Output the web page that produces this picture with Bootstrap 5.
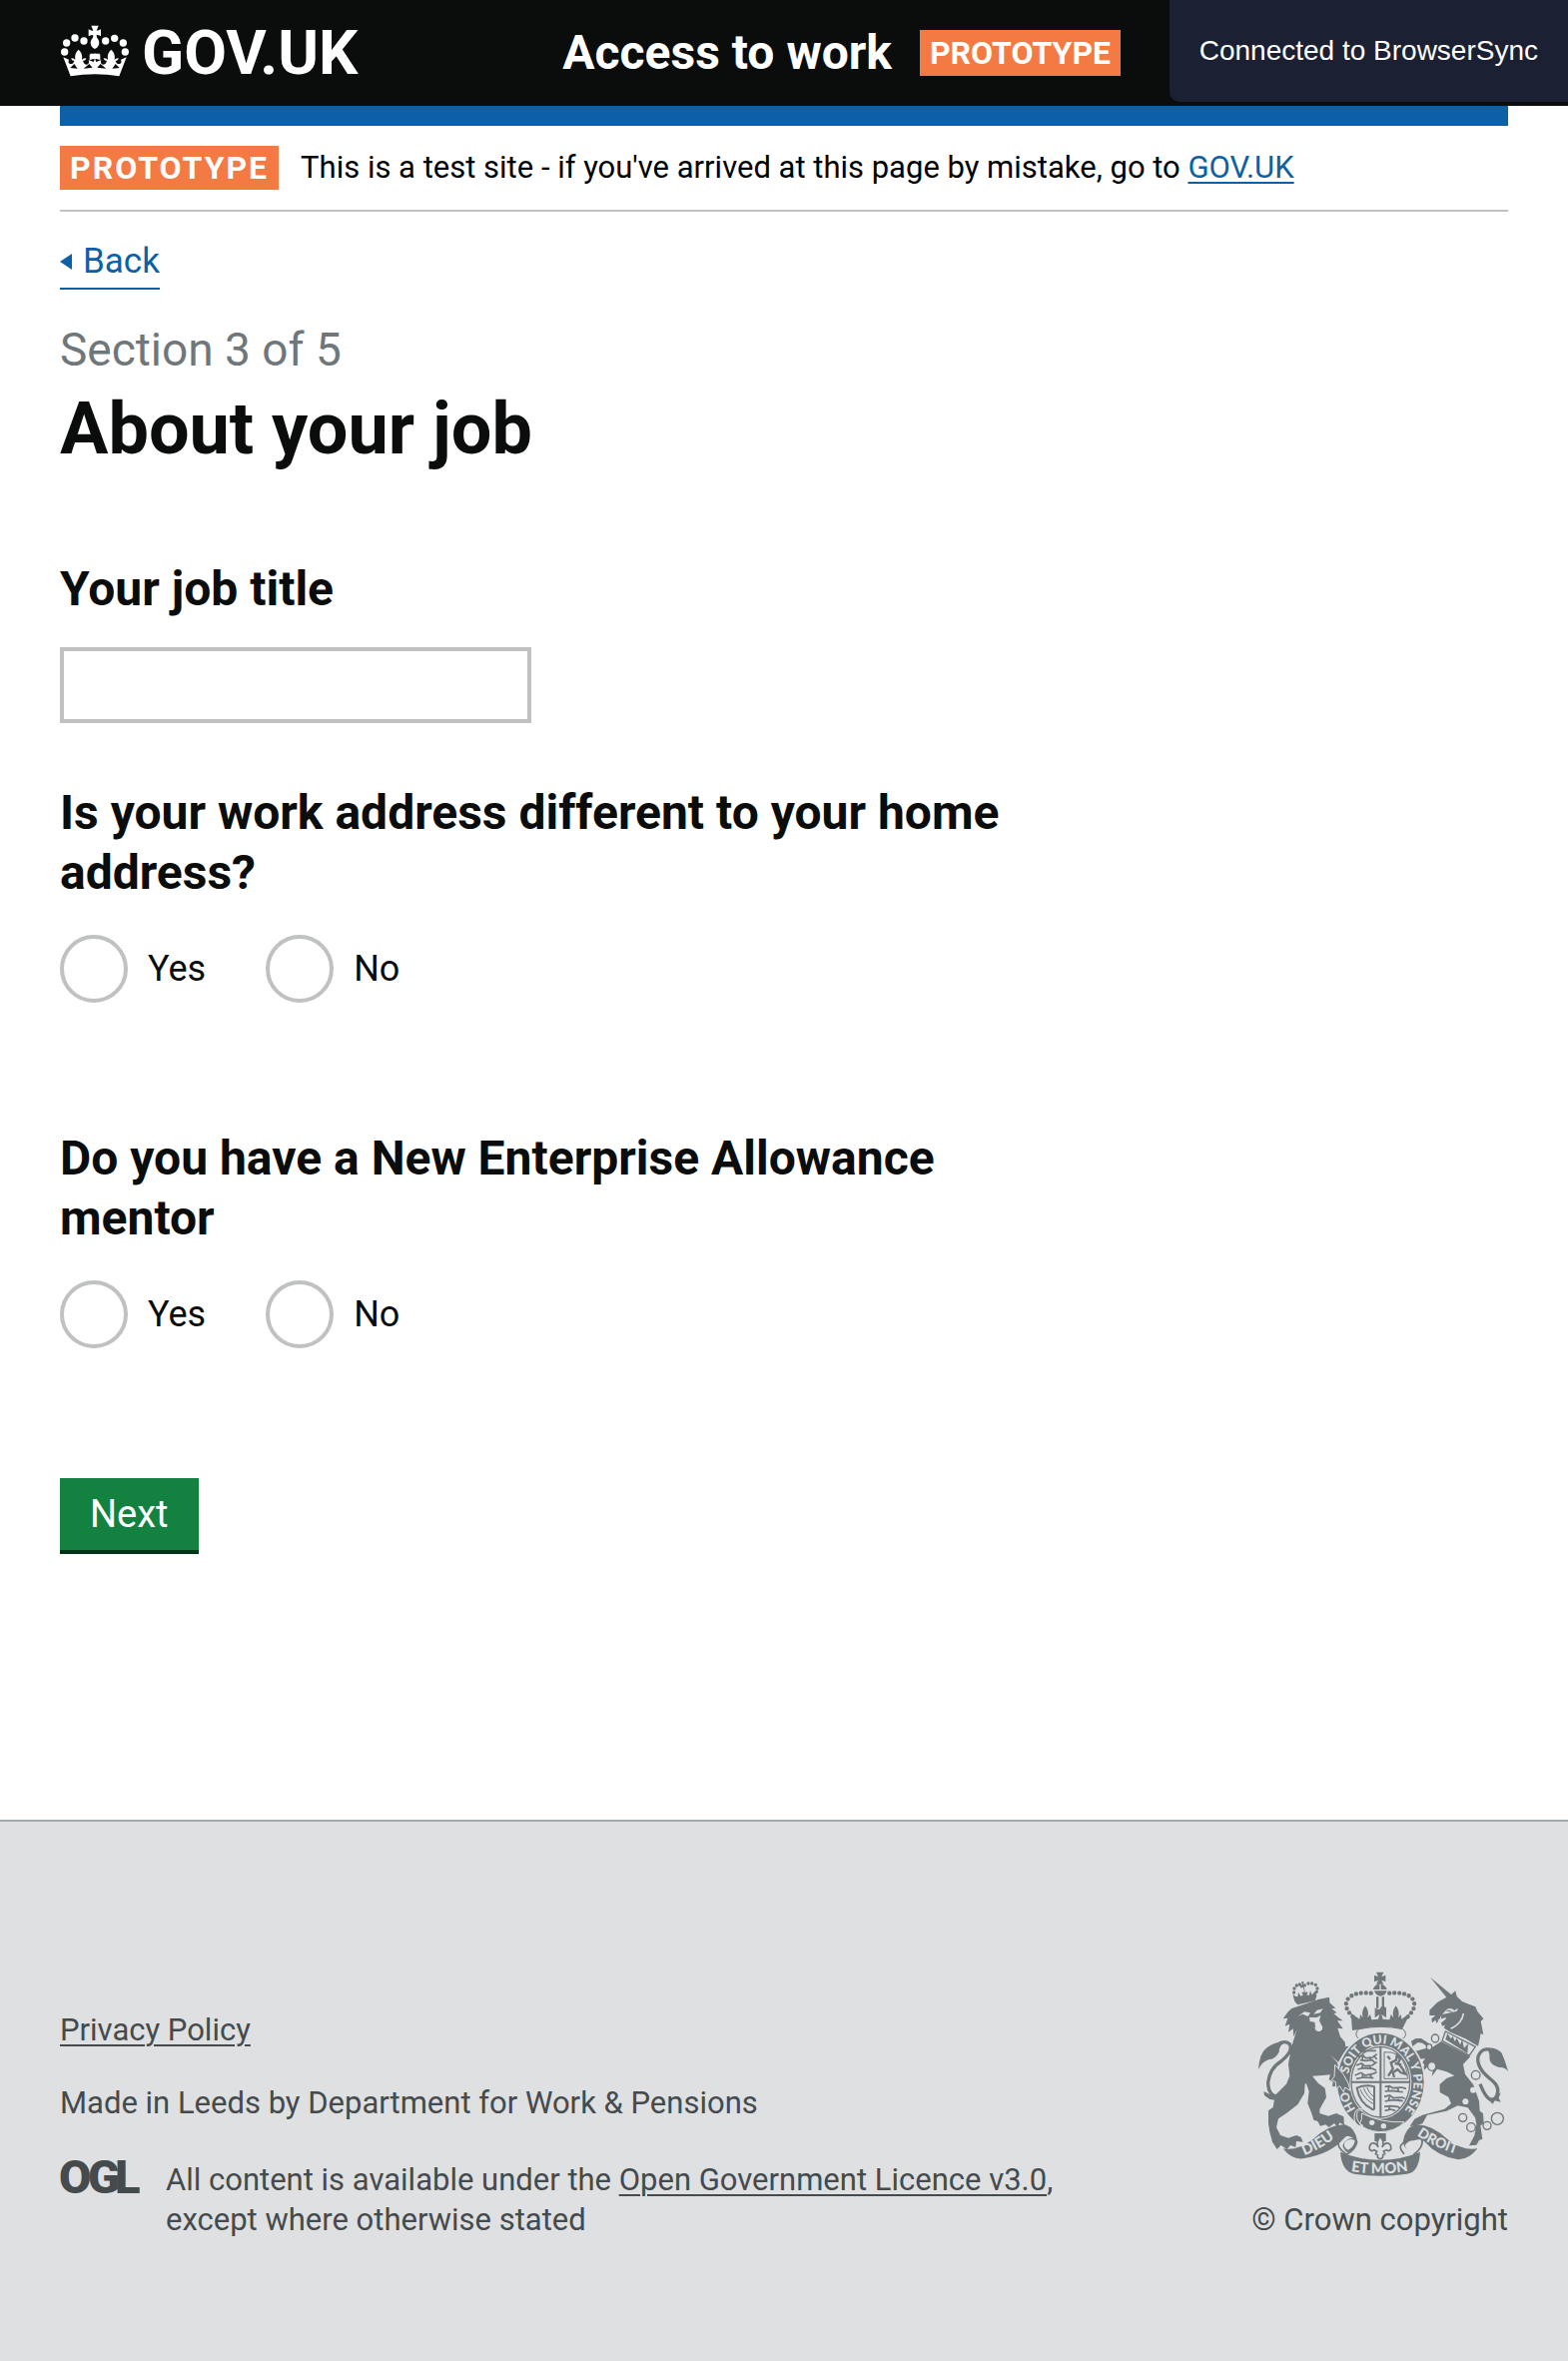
<!DOCTYPE html>
<html lang="en">
<head>
<meta charset="utf-8">
<meta name="viewport" content="width=device-width, initial-scale=1">
<title>About your job - Access to work</title>
<link rel="stylesheet" href="https://cdn.jsdelivr.net/npm/bootstrap@5.3.0/dist/css/bootstrap.min.css">
<style>
  :root { --ink:#0b0c0c; --blue:#0d60a5; --line:#bfc1c3; --orange:#f47a43; --foot:#454a4c; --crest:#6f777b; --page:60px; }
  body { font-family:Roboto,"Liberation Sans",sans-serif; font-size:31px; line-height:40px; color:var(--ink); background:#fff; }
  .page-pad { padding-left:var(--page); padding-right:var(--page); }
  a { color:var(--blue); text-decoration-thickness:2px; text-underline-offset:4px; }
  .top-bar { background:var(--ink); min-height:106px; color:#fff; }
  .brand-link { font-size:62px; line-height:62px; gap:12px; color:#fff; }
  .service-name { font-size:48px; line-height:60px; padding-left:20px; gap:28px; }
  .phase-tag { background:var(--orange); color:#fff; font-size:32px; line-height:46px; font-weight:700; padding:0 10px; }
  .sync-note { position:absolute; top:0; right:0; background:#1b2032; font:28px/42px "Liberation Sans",sans-serif; padding:30px; border-bottom-left-radius:10px; }
  .blue-rule { height:20px; background:var(--blue); }
  .phase-strip { padding:20px 0; gap:22px; border-bottom:2px solid var(--line); color:#000; }
  .phase-strip .phase-tag { line-height:44px; letter-spacing:2px; }
  .back-link { margin-top:28px; font-size:35px; line-height:44px; padding-bottom:4px; border-bottom:2px solid; gap:11px; }
  .section-note { display:block; margin-top:30px; font-size:46px; line-height:60px; font-weight:400; color:var(--crest); }
  .page-title { font-size:72px; line-height:100px; font-weight:700; margin:0 0 80px; }
  .question { font-size:48px; line-height:60px; font-weight:700; }
  .question-block { margin-bottom:126px; }
  .form-control.job-field { max-width:472px; height:76px; border:4px solid var(--line); border-radius:0; font-size:36px; margin:28px 0 60px; }
  .choices { gap:60px; padding-top:32px; font-size:36px; }
  .choices .form-check-input { width:68px; height:68px; border:4px solid var(--line); margin:0; float:none; }
  .btn.btn-next { background:#13813f; color:#fff; border:0; border-radius:0; box-shadow:0 4px 0 #003618; font-size:38px; line-height:60px; padding:6px 30px; margin-top:4px; }
  .main-area { padding-bottom:270px; }
  .site-foot { background:#dee0e2; border-top:2px solid #a1acb2; color:var(--foot); padding-top:150px; padding-bottom:122px; }
  .site-foot a { color:var(--foot); }
  .foot-text { gap:33px; }
  .crest-svg { width:250px; height:205px; }
  .crest-svg text { font-family:Lato,"Liberation Sans",sans-serif; font-weight:900; fill:#dee0e2; }
</style>
</head>
<body class="min-vh-100 d-flex flex-column">
<header class="top-bar page-pad d-flex align-items-center position-relative">
  <div class="row g-0 w-100 align-items-center">
    <div class="col-4 d-flex">
      <a class="brand-link d-flex align-items-center text-decoration-none fw-bold" href="#">
        <svg width="70" height="60" viewBox="60 70 210 180" fill="#fff" aria-hidden="true">
          <circle cx="80" cy="130" r="11"/><circle cx="105" cy="115" r="11"/><circle cx="132" cy="124" r="11"/>
          <circle cx="197" cy="124" r="11"/><circle cx="224" cy="116" r="11"/><circle cx="250" cy="130" r="11"/>
          <circle cx="74" cy="157" r="11"/><circle cx="256" cy="157" r="11"/>
          <path d="M154 78h22l-6 15q7 0 13-4v21q-7-5-13-4l1 8c10 9 10 27-6 34-16-7-16-25-6-34l1-8q-7 0-14 4V89q7 5 14 4z"/>
          <path d="M70 173l22 57q73-12 146 0l22-57-17 7q4 11-4 13-9 2-12-10 9 2 9-7-7 0-12 4 3-20-10-30-13 10-10 30-5-4-13-4 1 9 10 7-3 12-12 12-9-3-5-14l-15 6q-3-6-3-10l15 4v-16l-15 4 2-7h-6l2 7-15-4v16l15-4q0 4-3 10l-15-6q4 11-5 14-9 0-12-12 9 2 10-7-8 0-13 4 3-20-10-30-13 10-10 30-5-4-12-4 0 9 9 7-3 12-12 10-8-2-4-13z"/>
          <path d="M149 162h32l-11 16h-10z"/>
          <path d="M91 205l12-12 10 14zM131 207l17-14 10 11zM172 204l10-11 17 14zM217 207l10-14 12 12z" fill="#0b0c0c"/>
        </svg>
        <span>GOV.UK</span>
      </a>
    </div>
    <div class="col-8 service-name d-flex align-items-center fw-bold">
      <span>Access to work</span><span class="phase-tag">PROTOTYPE</span>
    </div>
  </div>
  <div class="sync-note">Connected to BrowserSync</div>
</header>

<main class="page-pad main-area">
  <div class="blue-rule"></div>
  <div class="phase-strip d-flex align-items-center">
    <strong class="phase-tag">PROTOTYPE</strong>
    <span>This is a test site - if you've arrived at this page by mistake, go to <a href="#">GOV.UK</a></span>
  </div>
  <a href="#" class="back-link d-inline-flex align-items-center text-decoration-none">
    <svg width="12" height="16" viewBox="0 0 12 16" aria-hidden="true"><path d="M12 0v16L0 8z" fill="currentColor"/></svg>Back</a>
  <h1 class="page-title"><span class="section-note">Section 3 of 5</span>About your job</h1>
  <form class="row g-0">
    <div class="col-8">
      <label class="question d-block" for="job-title">Your job title</label>
      <input class="form-control job-field" type="text" id="job-title">
      <fieldset class="question-block">
        <legend class="question m-0">Is your work address different to your home address?</legend>
        <div class="choices d-flex">
          <div class="choice d-flex align-items-center"><input class="form-check-input" type="radio" name="address" id="address-yes"><label class="ps-3 ms-1" for="address-yes">Yes</label></div>
          <div class="choice d-flex align-items-center"><input class="form-check-input" type="radio" name="address" id="address-no"><label class="ps-3 ms-1" for="address-no">No</label></div>
        </div>
      </fieldset>
      <fieldset class="question-block">
        <legend class="question m-0">Do you have a New Enterprise Allowance mentor</legend>
        <div class="choices d-flex">
          <div class="choice d-flex align-items-center"><input class="form-check-input" type="radio" name="mentor" id="mentor-yes"><label class="ps-3 ms-1" for="mentor-yes">Yes</label></div>
          <div class="choice d-flex align-items-center"><input class="form-check-input" type="radio" name="mentor" id="mentor-no"><label class="ps-3 ms-1" for="mentor-no">No</label></div>
        </div>
      </fieldset>
      <button type="button" class="btn btn-next">Next</button>
    </div>
  </form>
</main>

<footer class="site-foot page-pad flex-grow-1">
  <div class="d-flex justify-content-between align-items-end">
    <div class="d-flex flex-column foot-text">
      <div><a href="#">Privacy Policy</a></div>
      <div>Made in Leeds by Department for Work &amp; Pensions</div>
      <div class="d-flex align-items-start gap-4 pt-1">
        <svg width="82" height="36" viewBox="0 0 82 36" overflow="visible" role="img" aria-label="OGL"><text x="-1 28 55" y="33" font-family="Roboto" font-weight="900" font-size="47" fill="#454a4c">OGL</text></svg>
        <div>All content is available under the <a href="#">Open Government Licence v3.0</a>,<br>except where otherwise stated</div>
      </div>
    </div>
    <div class="d-flex flex-column align-items-end">
      <svg class="crest-svg mb-4" viewBox="90 70 750 615" fill="#6f777b" aria-hidden="true">
        <defs>
          <path id="garter" d="M396 498A99 118 0 1 1 520 496"/>
          <path id="ribbonL" d="M228 622Q278 604 332 560"/>
          <path id="ribbonM" d="M368 670Q457 684 548 668"/>
          <path id="ribbonR" d="M566 562Q620 600 698 622"/>
        </defs>
        <!-- lion: crown -->
        <g>
          <circle cx="197" cy="133" r="5"/><circle cx="198" cy="121" r="5"/><circle cx="205" cy="112" r="5"/><circle cx="214" cy="109" r="5"/>
          <circle cx="240" cy="106" r="5"/><circle cx="251" cy="106" r="5"/><circle cx="262" cy="110" r="5"/><circle cx="267" cy="121" r="5"/><circle cx="265" cy="131" r="5"/>
          <path d="M219 101l8 0-2 7 7-2 2 10-7 0 4 18 4-4 4 6-5 4 8 2 4-14 5 12 7-8 5-4 2 16-5 14-52 12-9-10-6-22 8 6 7 2 2-14 7 12 8-4-5-5 6-5 4 4-6-17-7 3-2-10 7 1z"/>
        </g>
        <!-- lion: head, mane and body -->
        <path d="M190 181l34-11 46-16 33-7 1 17 18 16-12 2 16 12-10 2 14 12 14 10-17 0 17 24-16-2 8 26 14 16 2 14 22-4-28 24-16 26-2 8 22 34 12 18 6 26-16-12-2 14-10-14-14 14-2-16-12 2 2-14-12-8 4-14-24 2-30 2 18 22 20 14 4 28-20 36 0 12 26 8 24-8 22 10 2 26-14-8-6 14-10-12-16 12-10-8-16 4-8-14-12-4-6-20-12-30 4-36-8-24-4 2-2 28-20 34-34 26-24 16-6 26 12 24 24 8 24-8 14 6 6 14-20-2-2 18-16-6-10 12-18-12-12 12-14-22-8-30-4-26 0-38 14-10 6-36 34-34 10-24-4-36 10-54 16-50-10 22-2-24-14 10 4-24-14 6 8-24-14 2 16-22z"/>
        <path d="M208 205l20-14 18 3-7 11-16-7zM256 198l10-12 18-4-8 12zM243 208l22 0 12-6-4 16 10 20q-2 14-14 12-12-4-8-16l-2-12-14-2zM305 320q40 34 62 66l-8 4q-20-36-54-70z" fill="#dee0e2"/>
        <!-- lion: tail -->
        <path d="M180 440Q120 462 119 404 124 360 158 340 196 310 184 288 170 276 150 288" fill="none" stroke="#6f777b" stroke-width="10"/>
        <path d="M90 364q4-48 22-62 26-22 58-20-18 10-18 30-12 22-30 22-20 6-32 30zM106 430l20 10 40 4 16-8-30 22-28-4-16-12z"/>
        <!-- unicorn: horn, head and mane -->
        <path d="M606 87l82 68-4 8-12 6z"/>
        <path d="M686 145l16 15 20 8 20 8 6 14 18 22-8 8 8 40-8-4-4 20-4 18-38-22-46-20-18-12 2-10 12-10 20-20 8-20-20 12-18-4-12 14-14 24-4-10-10 8-2-12 12-10-18 0 0-16 24-24 26-14 12-6 16-14z"/>
        <path d="M640 200l60-14 6 24-18 22-12 10-4-12-16-2-14 6-4-14z"/>
        <path d="M706 196q-4 30-38 46" fill="none" stroke="#dee0e2" stroke-width="5"/>
        <path d="M652 187q10-10 22-4l8 6-10 1q-10-6-20-3zM628 216l24-8 2 4-14 12z" fill="#dee0e2"/>
        <!-- unicorn: coronet collar -->
        <path d="M652 250l90 46-18 26-82-44z" fill="none" stroke="#6f777b" stroke-width="4"/>
        <path d="M652 274l6-18 10 16 6-8 6 16 6-10 10 20 6-16 6 26 12-14-2 30z"/>
        <!-- unicorn: body and legs -->
        <path d="M639 280l88 45-22 24 6 30 24 30 18 50 2 30 10 8 2 30-10 6 6 40-10 4-8 14-22 2 16-30 6-34-4-20-22-30-30-6-34 16-58 12-14 26-20 6-18 2 14-22 24-12 66-18 20-16-8-20-26-14 0-24 20-18 24-8-24-12-28-8-16 22 4-22-18-6-20 20 12-26-6-8 8-12-26 4-24 2-14-10 30-16 22-6 22-6-18-14-14-2-16 12-4-16 14-8 16 0 22 14 10 14z"/>
        <g fill="#dee0e2" stroke="#6f777b" stroke-width="4">
          <ellipse cx="621" cy="271" rx="11" ry="12"/><ellipse cx="603" cy="297" rx="8" ry="9"/><ellipse cx="611" cy="355" rx="12" ry="13"/>
          <circle cx="743" cy="381" r="13"/><circle cx="704" cy="509" r="12"/><circle cx="729" cy="538" r="13"/><circle cx="777" cy="533" r="12"/><circle cx="808" cy="512" r="18"/>
        </g>
        <g fill="#dee0e2"><circle cx="735" cy="426" r="9"/><circle cx="712" cy="461" r="9"/></g>
        <!-- unicorn: tail -->
        <path d="M756 408Q780 470 802 450 822 420 788 394 744 360 750 326 762 294 794 308" fill="none" stroke="#6f777b" stroke-width="10"/>
        <path d="M774 300q30-4 46 14 10 20 20 56-10-14-28-12-30-8-28-32 2-14-10-26zM764 440l18 16 18-10 18-12-6 16 6 12-18-4-6 10z"/>
        <!-- imperial crown -->
        <g fill="none" stroke="#6f777b" stroke-width="13" stroke-linecap="round" stroke-dasharray="0 15">
          <path d="M373 206Q344 176 358 154 376 128 436 136"/><path d="M539 206Q568 176 554 154 536 128 476 136"/>
        </g>
        <path d="M444 72h22l-6 14 12-5v20l-12-5 6 12h-22l6-12-12 5V81l12 5zM434 124q6-16 20-16v16zM458 108q14 2 18 16h-18zM438 128h38q-4 14-19 16-15-2-19-16zM444 146h7v34h-7zM461 146h7v34h-7z"/>
        <path d="M368 195l26 18 2-14 8 10q-6-20 7-36 13 16 7 36l8-10 4 16 20-2 4-14-14 10v-30q14 10 17 0t17 0v30l-14-10 4 14 20 2 4-16 8 10q-6-20 7-36 13 16 7 36l8-10 2 14 26-18-26 52q-76-14-148 0z"/>
        <path d="M392 243q-16 14-2 28h136q14-14-2-28-66-14-132 0z" fill="#dee0e2" stroke="#6f777b" stroke-width="3"/>
        <!-- garter and shield -->
        <ellipse cx="457" cy="402" rx="135" ry="152" fill="#dee0e2"/>
        <ellipse cx="457" cy="402" rx="130" ry="147"/>
        <ellipse cx="457" cy="402" rx="93" ry="111" fill="#dee0e2"/>
        <ellipse cx="457" cy="402" rx="88" ry="106" fill="#dee0e2" stroke="#6f777b" stroke-width="4"/>
        <path d="M454 296h6v212h-6zM369 399h176v6H369z"/>
        <g fill="none" stroke="#6f777b" stroke-width="5">
          <path d="M388 326l16-4 8 8 22-2 12-10M396 336l16 2 20-2 8 8M404 322l-2 12M424 326l4 12M436 322l10 12"/>
          <path d="M384 352l16-6 10 8 22-2 14-10M388 364l18-4 28 2 10 6M404 348l-4 16M424 352l4 12M380 382l18-8 12 8 22-4 14-6M384 392l22-4 30 2M404 376l-2 14M426 380l4 12M396 312l20-4 28 0"/>
          <path d="M470 416l14-2 10 6 26-2 14 4M470 430l20-2 34 4M482 416l-2 14M508 418l4 14M468 446l16-4 12 8 26-2 8 4M470 460l22-4 32 2M484 446l-4 14M508 448l6 12M468 476l18-2 22 2 8 4M470 488l18-4 14 4M484 474l-2 12"/>
          <path d="M468 312v80h70q0-40-26-70-20-12-44-10z" stroke-width="3"/>
          <path d="M480 384l14-22-6-18 16-8 2-14 10 10-6 12 14 20 8 14-14-4-10-10-14 10 4 14M500 346l20 4M486 334l-8-10" stroke-width="7"/>
          <path d="M386 420q26-12 52-4l0 66q-4 6-8 0-36-16-44-62z" stroke-width="6"/>
          <path d="M396 424q12 30 40 44M406 420q10 26 30 38M416 418q8 20 20 28" stroke-width="3"/>
        </g>
        <g font-size="37">
          <text><textPath href="#garter" startOffset="20">HO</textPath></text>
          <text><textPath href="#garter" startOffset="130">SOIT QUI MAL Y PENSE</textPath></text>
        </g>
        <!-- lion paw over the garter -->
        <path d="M320 350l26 30 14 26 6 22-16-10-4 14-12-18-10 8-2-20-12-6 8-10z" stroke="#dee0e2" stroke-width="3"/>
        <!-- buckle and strap -->
        <path d="M402 488q-14-6-16 10-2 26 18 34l-2 4q-24-4-24-28 0-28 24-26zM400 496q60 30 128 26-26 30-76 30-40-4-58-24 10-14 6-32z" stroke="#dee0e2" stroke-width="3"/>
        <circle cx="431" cy="524" r="8" fill="#dee0e2"/><circle cx="466" cy="534" r="8" fill="#dee0e2"/>
        <!-- motto ribbons -->
        <path d="M164 602q44 8 90-28 50-46 96-44 32 10 38 52-6 24-30 32-22-16-10-30 14-16 28-12-18-14-28-2-40 48-124 62-34 4-60-30z"/>
        <path d="M334 570q-14 30 24 50M386 582q-4 22-28 36M528 618q-26-26 8-38M580 570q10 26-24 50" fill="none" stroke="#6f777b" stroke-width="5"/>
        <path d="M748 602q-44 8-90-28-50-46-96-44-32 10-38 52 2 12 12 22 2-18 20-26 22-8 32 2 38 44 98 54 34 4 62-32z"/>
        <path d="M350 582q14-14 30-4-2 18-20 28-18-8-10-24zM530 592q10-14 24-14l10 12q-4 14-16 20-16-4-18-18z" fill="#dee0e2"/>
        <path d="M336 612q58 24 120 24t120-24q-4 62-40 66-80 12-158 0-38-8-42-66z"/>
        <g font-size="44"><text><textPath href="#ribbonL">DIEU</textPath></text><text><textPath href="#ribbonM">ET MON</textPath></text><text font-size="42"><textPath href="#ribbonR">DROIT</textPath></text></g>
        <!-- fleur-de-lis -->
        <path d="M439 556h34v24h-34z"/>
        <path d="M456 566q-14 14-6 32-6-14-18-12-10 4-8 18 6 8 14 2l8 4-4 8 6 2v8q8 10 16 0v-8l6-2-4-8 8-4q8 6 14-2 2-14-8-18-12-2-18 12 8-18-6-32z" fill="#dee0e2" stroke="#6f777b" stroke-width="5"/>
      </svg>
      <div>© Crown copyright</div>
    </div>
  </div>
</footer>
<script src="https://cdn.jsdelivr.net/npm/bootstrap@5.3.0/dist/js/bootstrap.bundle.min.js"></script>
</body>
</html>
